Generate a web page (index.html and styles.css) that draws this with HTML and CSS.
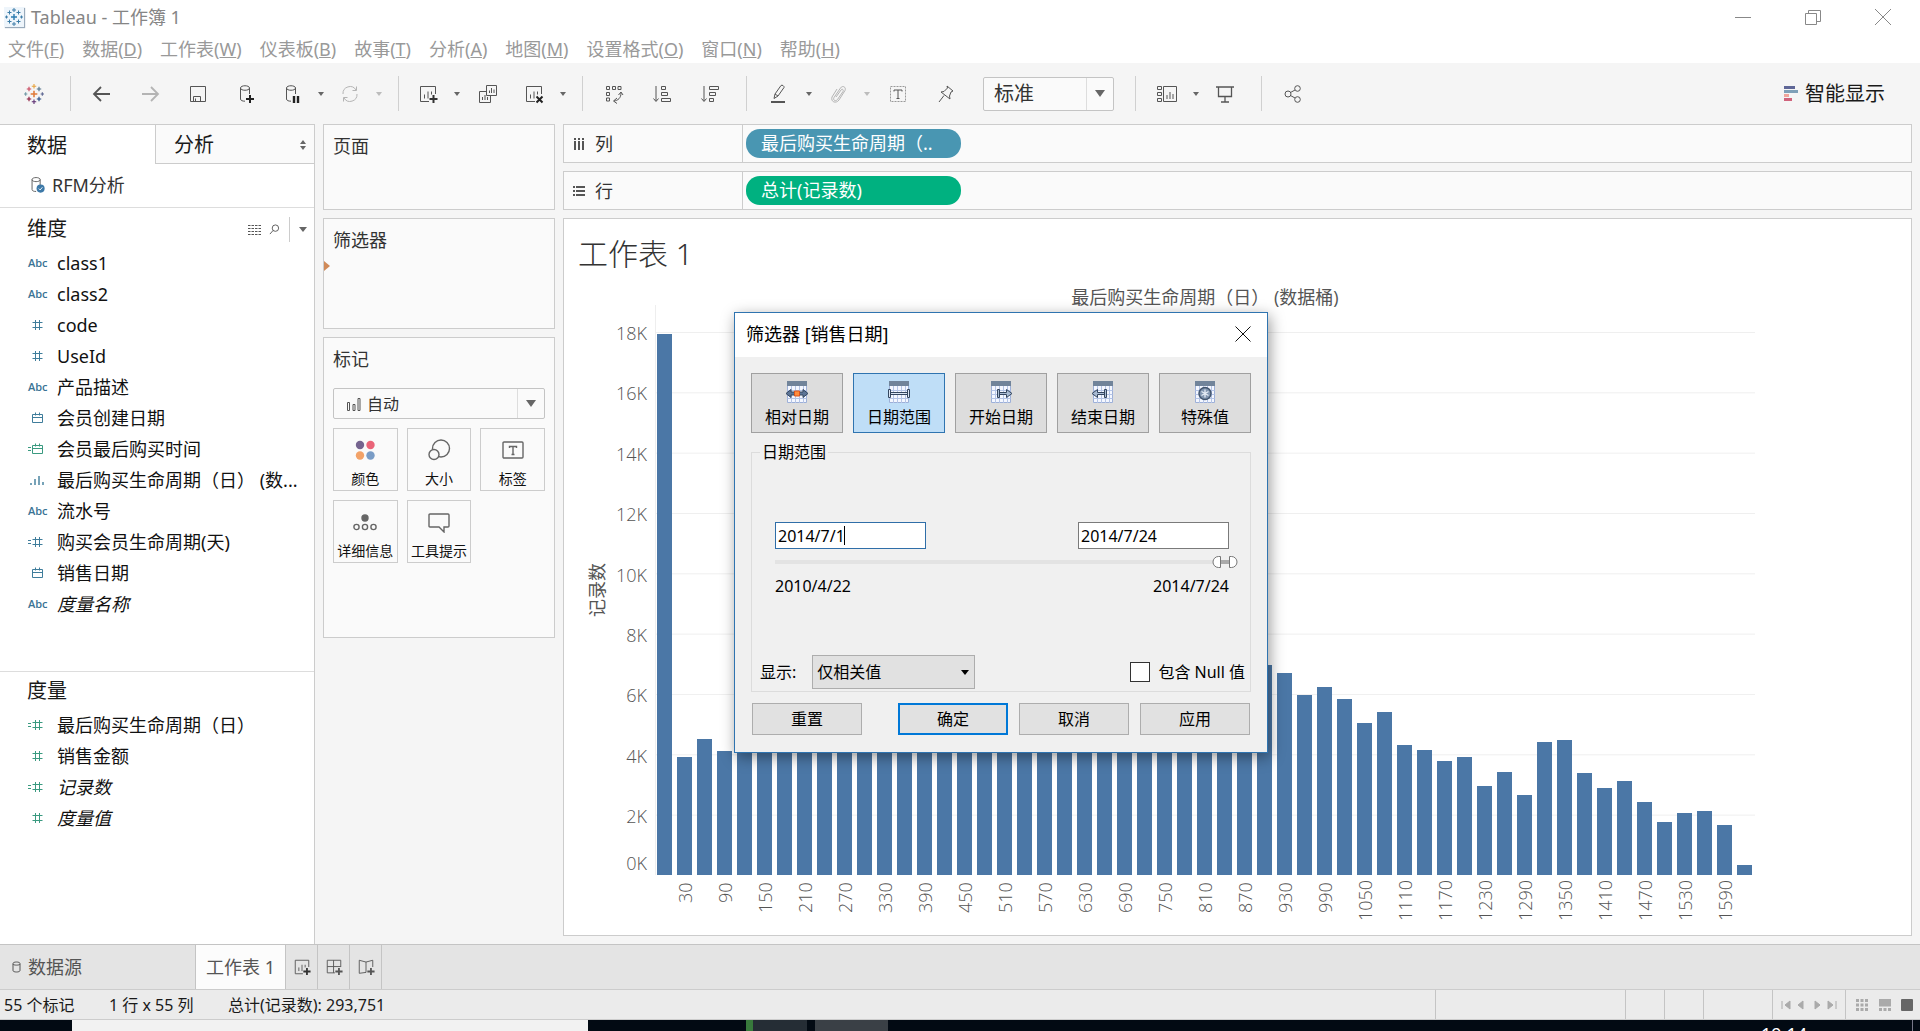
FILE: index.html
```html
<!DOCTYPE html>
<html lang="zh-CN">
<head>
<meta charset="utf-8">
<title>Tableau - 工作簿 1</title>
<link rel="stylesheet" href="styles.css">
</head>
<body>
<svg class="defs" aria-hidden="true">
  <symbol id="tableau" viewBox="0 0 18 18">
    <path d="M9 6v6M6 9h6" stroke="#e07b39" stroke-width="1.400"/>
    <path d="M4.500 2.500v4M2.500 4.500h4" stroke="#c8455c"/><path d="M13.500 2.500v4M11.500 4.500h4" stroke="#4f6f87"/>
    <path d="M4.500 11.500v4M2.500 13.500h4" stroke="#8a1538"/><path d="M13.500 11.500v4M11.500 13.500h4" stroke="#1f447e"/>
    <path d="M9 0v4M7 2h4" stroke="#e8a23c"/><path d="M9 14v4M7 16h4" stroke="#5b2d72"/>
    <path d="M1.500 7.500v3M0 9h3" stroke="#7199a6"/><path d="M16.500 7.500v3M15 9h3" stroke="#5b6591"/>
  </symbol>
  <symbol id="tableau-blue" viewBox="0 0 18 18">
    <path d="M9 6v6M6 9h6" stroke="#2b7bb0" stroke-width="1.400"/>
    <path d="M4.500 2.500v4M2.500 4.500h4M13.500 2.500v4M11.500 4.500h4M4.500 11.500v4M2.500 13.500h4M13.500 11.500v4M11.500 13.500h4M9 0v4M7 2h4M9 14v4M7 16h4M1.500 7.500v3M0 9h3M16.500 7.500v3M15 9h3" stroke="#3c7da8"/>
  </symbol>
  <symbol id="back" viewBox="0 0 20 20"><path d="M2 10h16M9 3l-7 7 7 7" stroke-width="1.800"/></symbol>
  <symbol id="fwd" viewBox="0 0 20 20"><path d="M2 10h16M11 3l7 7-7 7" stroke-width="1.800"/></symbol>
  <symbol id="save" viewBox="0 0 20 20"><path d="M2.500 2.500h15v15h-15zM5.500 17.500v-5h7v5M7.500 14.500v3"/></symbol>
  <symbol id="db" viewBox="0 0 20 20"><path d="M4.500 4c0-3 9-3 9 0s-9 3-9 0v11c0 1.500 2 2.200 4.500 2.200M13.500 4v6"/></symbol>
  <symbol id="dbplus" viewBox="0 0 20 20"><use href="#db"/><path d="M14 11v8M10 15h8" stroke="#222" stroke-width="2"/></symbol>
  <symbol id="dbpause" viewBox="0 0 20 20"><use href="#db"/><path d="M12 12v7M16 12v7" stroke="#222" stroke-width="2.400"/></symbol>
  <symbol id="refresh" viewBox="0 0 20 20"><path d="M3 10a7 7 0 0 1 13-4M17 10a7 7 0 0 1-13 4M16.500 2.500V6.500H12.500M3.500 17.500V13.500H7.500"/></symbol>
  <symbol id="sheet" viewBox="0 0 20 20"><path d="M11 17.500H2.500v-15h15V10M6.500 14.500v-4M10 14.500v-7M13.500 10.500v-3"/></symbol>
  <symbol id="newsheet" viewBox="0 0 20 20"><use href="#sheet"/><path d="M15.500 11v8M11.500 15h8" stroke="#333" stroke-width="2"/></symbol>
  <symbol id="clearsheet" viewBox="0 0 20 20"><use href="#sheet"/><path d="M12.500 12.500l6 6M18.500 12.500l-6 6" stroke="#222" stroke-width="2"/></symbol>
  <symbol id="dup" viewBox="0 0 20 20"><path d="M8.500 1.500h10v10h-10zM8.500 7.500h-7v11h11v-7M11.500 9V6.500M13.500 9V4M16 9V5.500M4.500 16v-3M7 16v-5M9.500 16v-3"/></symbol>
  <symbol id="swap" viewBox="0 0 20 20"><path d="M2.500 2.500h3v3h-3zM8.500 2.500h3v3h-3zM14 2.500h3v3h-3zM2.500 8.500h3v3h-3zM2.500 14h3v3h-3zM17 9c0 5-3 7.500-7 8M13 14l-3.500 3 3.500 2.500M14.500 11l2.500-3 2 3"/></symbol>
  <symbol id="asc" viewBox="0 0 20 20"><path d="M4 2v15M1.500 14.500L4 17.500l2.500-3M9.500 2.500h4v3h-4zM9.500 8.500h6v3h-6zM9.500 14.500h9v3h-9z"/></symbol>
  <symbol id="desc" viewBox="0 0 20 20"><path d="M4 2v15M1.500 14.500L4 17.500l2.500-3M9.500 2.500h9v3h-9zM9.500 8.500h6v3h-6zM9.500 14.500h4v3h-4z"/></symbol>
  <symbol id="pen" viewBox="0 0 20 20"><path d="M6 14.500l1-4.500 6-8.500c1-1 3.500.500 3 2l-6 8.500zM7 10l3 2"/><path d="M3 18h14" stroke-width="2"/></symbol>
  <symbol id="clip" viewBox="0 0 20 20"><path d="M8 13l5-7c1-1.500 3-.5 2 1.500L9.500 15.500c-2 2.500-5 .5-3.500-2L12.500 4c2-3 6-1 4.500 2.500L11 16c-3 4-8.500 2-7-3l5-8"/></symbol>
  <symbol id="textbox" viewBox="0 0 20 20"><path d="M2.500 2.500h15v15h-15z" stroke="#999" stroke-dasharray="2 1"/><path d="M6 7.500V6h8v1.500M10 6v9M8.500 14.500h3"/></symbol>
  <symbol id="pin" viewBox="0 0 20 20"><path d="M11 2l6 5-2 1-1.500 4 .5 3-9-7 3-.5L11.500 4zM8 11.500L3 18"/></symbol>
  <symbol id="cards" viewBox="0 0 20 20"><path d="M.5 2.500h4v3h-4zM.5 8.500h4v3h-4zM.5 14.500h4v3h-4zM6.500 2.500h13v15h-13zM10 15v-4M13 15V8M16 15v-5"/></symbol>
  <symbol id="present" viewBox="0 0 20 20"><path d="M1 3h18M3.500 3v9.500h13V3M10 12.500V18M6 18h8" stroke-width="1.300"/></symbol>
  <symbol id="share" viewBox="0 0 20 20"><circle cx="5" cy="10" r="3"/><circle cx="14.500" cy="4.500" r="2.800"/><circle cx="14.500" cy="15.500" r="2.800"/><path d="M7.500 8.500L12 6M7.500 11.500L12 14"/></symbol>
  <symbol id="hash" viewBox="0 0 20 12"><path d="M4.500 3.500h10M4.500 8.500h10M7.500 1v10M11.500 1v10"/></symbol>
  <symbol id="eqhash" viewBox="0 0 20 12"><path d="M0 4.500h3M0 7.500h3"/><use href="#hash"/></symbol>
  <symbol id="cal" viewBox="0 0 20 12"><path d="M4.500 2.500h10v8h-10zM4.500 5.500h10M7.500 .5v3M11.500 .5v3"/></symbol>
  <symbol id="eqcal" viewBox="0 0 20 12"><path d="M0 4.500h3M0 7.500h3"/><use href="#cal"/></symbol>
  <symbol id="bins" viewBox="0 0 20 12"><path d="M3 9v2M7 5v6M11 2v9M15 8v3" stroke-width="1.400"/></symbol>
  <symbol id="calendar" viewBox="0 0 24 24">
    <path d="M2.500 2.500h19v20h-19z" fill="#f4f7ff" stroke="#9db0d8"/><path d="M2 1h20v5H2z" fill="#71849a" stroke="none"/>
    <path d="M2.500 10.500h19M2.500 14.500h19M2.500 18.500h19M6.500 6v17M10.500 6v17M14.500 6v17M18.500 6v17" stroke="#b4c4e6"/>
  </symbol>
</svg>

<header class="titlebar">
  <svg class="appicon"><use href="#tableau-blue"/></svg>
  <span class="apptitle">Tableau - 工作簿 1</span>
  <div class="winbtns">
    <button aria-label="最小化"><svg class="ic"><path d="M2 10.500h16"/></svg></button>
    <button aria-label="还原"><svg class="ic"><path d="M2.500 6.500h11v11h-11zM5.500 6.500v-3h12v11h-4"/></svg></button>
    <button aria-label="关闭"><svg class="ic"><path d="M2 2l16 16M18 2L2 18"/></svg></button>
  </div>
</header>

<nav class="menubar">
  <a href="#">文件(<u>F</u>)</a><a href="#">数据(<u>D</u>)</a><a href="#">工作表(<u>W</u>)</a><a href="#">仪表板(<u>B</u>)</a><a href="#">故事(<u>T</u>)</a><a href="#">分析(<u>A</u>)</a><a href="#">地图(<u>M</u>)</a><a href="#">设置格式(<u>O</u>)</a><a href="#">窗口(<u>N</u>)</a><a href="#">帮助(<u>H</u>)</a>
</nav>

<div class="toolbar">
  <button class="tb" aria-label="起始页"><svg class="ic"><use href="#tableau"/></svg></button>
  <i class="sep"></i>
  <button class="tb" aria-label="撤消"><svg class="ic"><use href="#back"/></svg></button>
  <button class="tb dim" aria-label="重做"><svg class="ic"><use href="#fwd"/></svg></button>
  <button class="tb" aria-label="保存"><svg class="ic"><use href="#save"/></svg></button>
  <button class="tb" aria-label="新建数据源"><svg class="ic"><use href="#dbplus"/></svg></button>
  <button class="tb split" aria-label="暂停更新"><svg class="ic"><use href="#dbpause"/></svg></button><button class="more" aria-label="更多"></button>
  <button class="tb split dim" aria-label="刷新"><svg class="ic"><use href="#refresh"/></svg></button><button class="more dim" aria-label="更多"></button>
  <i class="sep"></i>
  <button class="tb split" aria-label="新建工作表"><svg class="ic"><use href="#newsheet"/></svg></button><button class="more" aria-label="更多"></button>
  <button class="tb" aria-label="复制工作表"><svg class="ic"><use href="#dup"/></svg></button>
  <button class="tb split" aria-label="清除工作表"><svg class="ic"><use href="#clearsheet"/></svg></button><button class="more" aria-label="更多"></button>
  <i class="sep"></i>
  <button class="tb" aria-label="交换行和列"><svg class="ic"><use href="#swap"/></svg></button>
  <button class="tb" aria-label="升序排序"><svg class="ic"><use href="#asc"/></svg></button>
  <button class="tb" aria-label="降序排序"><svg class="ic"><use href="#desc"/></svg></button>
  <i class="sep"></i>
  <button class="tb" aria-label="突出显示"><svg class="ic"><use href="#pen"/></svg></button><button class="more" aria-label="更多"></button>
  <button class="tb split dim" aria-label="分组"><svg class="ic"><use href="#clip"/></svg></button><button class="more dim" aria-label="更多"></button>
  <button class="tb" aria-label="显示标记标签"><svg class="ic"><use href="#textbox"/></svg></button>
  <button class="tb" aria-label="固定轴"><svg class="ic"><use href="#pin"/></svg></button>
  <div class="combo fit"><select aria-label="适合"><option>标准</option></select><i class="drop"></i></div>
  <i class="sep"></i>
  <button class="tb" aria-label="显示/隐藏卡"><svg class="ic"><use href="#cards"/></svg></button><button class="more tight" aria-label="更多"></button>
  <button class="tb" aria-label="演示模式"><svg class="ic"><use href="#present"/></svg></button>
  <i class="sep"></i>
  <button class="tb" aria-label="共享"><svg class="ic"><use href="#share"/></svg></button>
  <button class="showme"><svg class="smicon" viewBox="0 0 14 16"><path d="M0 0h11v3H0z" fill="#5f6797"/><path d="M0 4h14v3H0z" fill="#7fa0b8"/><path d="M0 8h5v3H0z" fill="#f0a69c"/><path d="M0 12h8v3H0z" fill="#d0637c"/></svg>智能显示</button>
</div>

<main class="work">
  <aside class="datapane">
    <div class="panetabs">
      <button class="on">数据</button>
      <button class="off">分析<svg class="spin" viewBox="0 0 6 10"><path d="M3 0l3 4H0zM3 10L0 6h6z"/></svg></button>
    </div>
    <div class="source"><svg class="srcic" viewBox="0 0 20 20"><use href="#db"/><circle cx="14" cy="14" r="4.500" class="check"/><path d="M12 14l1.500 1.500 2.500-3" stroke="#fff"/></svg>RFM分析</div>
    <section class="dims">
      <div class="sechead"><h2>维度</h2>
        <svg class="grid" viewBox="0 0 13 11"><path d="M0 1.500h13M0 4.500h13M0 7.500h13M0 10.500h13" stroke-dasharray="2.500 1"/></svg>
        <svg class="lens" viewBox="0 0 12 12"><circle cx="7" cy="4.500" r="3.500"/><path d="M4.500 7L1 11"/></svg>
        <i class="vline"></i><i class="tri"></i>
      </div>
      <ul class="fields">
        <li><b>Abc</b>class1</li>
        <li><b>Abc</b>class2</li>
        <li><svg><use href="#hash"/></svg>code</li>
        <li><svg><use href="#hash"/></svg>UseId</li>
        <li><b>Abc</b>产品描述</li>
        <li><svg><use href="#cal"/></svg>会员创建日期</li>
        <li class="green"><svg><use href="#eqcal"/></svg>会员最后购买时间</li>
        <li><svg><use href="#bins"/></svg>最后购买生命周期（日） (数...</li>
        <li><b>Abc</b>流水号</li>
        <li><svg><use href="#eqhash"/></svg>购买会员生命周期(天)</li>
        <li><svg><use href="#cal"/></svg>销售日期</li>
        <li><b>Abc</b><em>度量名称</em></li>
      </ul>
    </section>
    <section class="measures">
      <div class="sechead"><h2>度量</h2></div>
      <ul class="fields">
        <li class="green"><svg><use href="#eqhash"/></svg>最后购买生命周期（日）</li>
        <li class="green"><svg><use href="#hash"/></svg>销售金额</li>
        <li class="green"><svg><use href="#eqhash"/></svg><em>记录数</em></li>
        <li class="green"><svg><use href="#hash"/></svg><em>度量值</em></li>
      </ul>
    </section>
  </aside>

  <div class="cards">
    <section class="card pages"><h3>页面</h3></section>
    <section class="card filters"><h3>筛选器</h3><i class="marker"></i></section>
    <section class="card marks"><h3>标记</h3>
      <div class="combo marktype">
        <svg class="barsic" viewBox="0 0 14 14"><path d="M.5 5.500h2v8h-2zM6 7.500h2v6h-2zM11 1.500h2v12h-2z"/></svg>
        <select aria-label="标记类型"><option>自动</option></select><i class="drop"></i>
      </div>
      <div class="markgrid">
        <button><svg viewBox="0 0 24 22"><g stroke="none"><circle cx="7" cy="6" r="4.200" fill="#75648f"/><circle cx="17.500" cy="6" r="4.200" fill="#ea6478"/><circle cx="7" cy="16.500" r="4.200" fill="#f2a268"/><circle cx="17.500" cy="16.500" r="4.200" fill="#799cc6"/></g></svg>颜色</button>
        <button><svg viewBox="0 0 24 22"><circle cx="14" cy="9.500" r="8.500"/><circle cx="7" cy="15.500" r="5" fill="#fafafa"/></svg>大小</button>
        <button><svg viewBox="0 0 24 22"><rect x="2" y="3" width="20" height="16" rx="1"/><path d="M8.500 9V7.500h7V9M12 7.500v8M10.500 15.500h3"/></svg>标签</button>
        <button><svg viewBox="0 0 24 22"><circle cx="12" cy="7" r="3" fill="#666"/><circle cx="3.500" cy="16" r="2.600"/><circle cx="12" cy="16" r="2.600"/><circle cx="20.500" cy="16" r="2.600"/></svg>详细信息</button>
        <button><svg viewBox="0 0 24 22"><path d="M3 3h18q1 0 1 1v11q0 1-1 1h-4v5l-5-5H3q-1 0-1-1V4q0-1 1-1z"/></svg>工具提示</button>
      </div>
    </section>
  </div>

  <div class="view">
    <div class="shelf"><div class="shelfname"><svg viewBox="0 0 12 12"><path d="M2 0v2M6 0v2M10 0v2M2 3v9M6 3v9M10 3v9" stroke-width="2"/></svg>列</div><span class="pill blue">最后购买生命周期（..</span></div>
    <div class="shelf"><div class="shelfname"><svg viewBox="0 0 12 12"><path d="M0 2h2M0 6h2M0 10h2M3 2h9M3 6h9M3 10h9" stroke-width="2"/></svg>行</div><span class="pill emerald">总计(记录数)</span></div>
    <section class="sheet">
      <h1>工作表 1</h1>
      <div class="chart">
        <div class="coltitle">最后购买生命周期（日） (数据桶)</div>
        <div class="ytitle"><span>记录数</span></div>
        <div class="yaxis" id="yaxis"></div>
        <div class="plot" id="plot"></div>
        <div class="xaxis" id="xaxis"></div>
      </div>
    </section>
  </div>
</main>

<footer class="sheettabs">
  <button class="srctab"><svg viewBox="0 0 10 12"><path d="M1 2.500c0-2 7-2 7 0v7c0 2-7 2-7 0zM1 3c0 1.500 7 1.500 7 0"/></svg>数据源</button>
  <button class="current">工作表 1</button>
  <button class="add" aria-label="新建工作表"><svg viewBox="0 0 20 20"><use href="#newsheet"/></svg></button>
  <button class="add" aria-label="新建仪表板"><svg viewBox="0 0 20 20"><path d="M17.500 10V2.500h-15v14H11M2.500 9.500h15M9.500 2.500v14"/><path d="M15.500 11v8M11.500 15h8" stroke-width="2"/></svg></button>
  <button class="add" aria-label="新建故事"><svg viewBox="0 0 20 20"><path d="M10 16l-7.500 1v-14.500l7.500 2 7.500-2V10M10 4.500V16"/><path d="M15.500 11v8M11.500 15h8" stroke-width="2"/></svg></button>
</footer>
<div class="status">
  <span class="s1">55 个标记</span><span class="s2">1 行 x 55 列</span><span>总计(记录数): 293,751</span>
  <div class="cells"><i class="c1"></i><i class="c2"></i><i class="c2"></i><i class="c3"></i>
    <div class="nav"><svg viewBox="0 0 10 10"><path d="M1 1v8M9 1v8L4 5z"/></svg><svg viewBox="0 0 10 10"><path d="M7 1v8L2 5z"/></svg><svg viewBox="0 0 10 10"><path d="M3 1v8l5-4z"/></svg><svg viewBox="0 0 10 10"><path d="M9 1v8M1 1v8l5-4z"/></svg></div>
    <div class="modes"><svg viewBox="0 0 12 12"><path d="M0 0h3v3H0zM4.500 0h3v3h-3zM9 0h3v3H9zM0 4.500h3v3H0zM4.500 4.500h3v3h-3zM9 4.500h3v3H9zM0 9h3v3H0zM4.500 9h3v3h-3zM9 9h3v3H9z"/></svg><svg viewBox="0 0 12 12"><path d="M0 0h12v7.500H0zM0 9h3v3H0zM4.500 9h3v3h-3zM9 9h3v3H9z"/></svg><svg class="full" viewBox="0 0 12 12"><rect width="12" height="12" rx="1"/></svg></div>
  </div>
</div>
<div class="taskbar"><i class="search"></i><i class="t1"></i><i class="t2"></i><i class="t3"></i><span class="clock">19:14</span><i class="peek"></i></div>

<div class="dialog" role="dialog" aria-label="筛选器 [销售日期]">
  <div class="dlghead">筛选器 [销售日期]<button aria-label="关闭"><svg viewBox="0 0 16 16"><path d="M.5 .5l15 15M15.500 .5l-15 15"/></svg></button></div>
  <div class="dlgbody">
    <div class="kinds">
      <button><svg viewBox="0 0 24 24"><use href="#calendar"/><path d="M1 13.500l5-4v2.500h12V9.500l5 4-5 4V15H6v2.500z" fill="#5d7596" stroke="#34465f"/><path d="M9.500 11h5v5h-5z" fill="#ff8c3c" stroke="#d9541e"/></svg>相对日期</button>
      <button class="on"><svg viewBox="0 0 24 24"><use href="#calendar"/><path d="M1.500 9.500h2v8h-2zM20.500 9.500h2v8h-2zM3.500 12.500h17v2h-17z" fill="#dbe6f5" stroke="#34465f"/></svg>日期范围</button>
      <button><svg viewBox="0 0 24 24"><use href="#calendar"/><path d="M8.500 9.500h2v8h-2zM10.500 12.500h7v-3l5.500 4-5.500 4v-3h-7z" fill="#a9bbd3" stroke="#34465f"/></svg>开始日期</button>
      <button><svg viewBox="0 0 24 24"><use href="#calendar"/><path d="M13.500 9.500h2v8h-2zM13.500 12.500h-7v-3l-5.500 4 5.500 4v-3h7z" fill="#a9bbd3" stroke="#34465f"/></svg>结束日期</button>
      <button><svg viewBox="0 0 24 24"><use href="#calendar"/><circle cx="12" cy="13.500" r="6" fill="#8195b0" stroke="#42556e" stroke-width="1.500"/><path d="M12 9.500v8M8.500 11.500l7 4M15.500 11.500l-7 4" stroke="#e6edf6" stroke-width="1.300"/></svg>特殊值</button>
    </div>
    <fieldset>
      <legend>日期范围</legend>
      <div class="range">
        <div class="fieldwrap"><input type="text" class="focus" value="2014/7/1" aria-label="开始日期"><i class="cursor"></i></div>
        <input type="text" value="2014/7/24" aria-label="结束日期">
      </div>
      <div class="slider"><svg class="thumbs" viewBox="0 0 26 12"><path d="M9 4h8v4H9z" fill="#aaa" stroke="none"/><path d="M8.500 .5v11H6.500a5.500 5.500 0 0 1 0-11zM17.500 .5v11h2a5.500 5.500 0 0 0 0-11z" fill="#fff" stroke="#777"/></svg></div>
      <div class="range ends"><span>2010/4/22</span><span>2014/7/24</span></div>
      <div class="options">
        <label for="show">显示:</label>
        <div class="show"><select id="show"><option>仅相关值</option></select><i class="drop"></i></div>
        <label class="nulls"><input type="checkbox">包含 Null 值</label>
      </div>
    </fieldset>
    <div class="actions"><button>重置</button><button class="ok">确定</button><button>取消</button><button>应用</button></div>
  </div>
</div>
<script src="chart.js"></script>
</body>
</html>
```
FILE: styles.css
```css
* { box-sizing: border-box; }
body {
  margin: 0; min-height: 100vh; display: flex; flex-direction: column; overflow: hidden;
  background: #f5f5f5; color: #1a1a1a;
  font: 18px/24px "Noto Sans", "Noto Sans CJK SC", sans-serif;
}
button, input, select { font: inherit; color: inherit; margin: 0; padding: 0; border: 0; background: none; border-radius: 0; }
select { appearance: none; flex: 1; min-width: 0; outline: 0; }
h1, h2, h3, ul { margin: 0; padding: 0; font-weight: 400; list-style: none; }
i { display: block; }
svg { fill: none; stroke: #555; flex: none; display: block; }
.defs { position: absolute; width: 0; height: 0; }
.ic { width: 20px; height: 20px; }

.titlebar { height: 34px; display: flex; align-items: center; background: #fff; color: #858585; padding-left: 4px; }
.appicon { width: 20px; height: 20px; padding: 1px; background: #eef5fb; box-shadow: 1px 1px 1px #9ab; margin-right: 7px; }
.winbtns { margin-left: auto; padding-right: 2px; display: flex; }
.winbtns button { width: 70px; height: 34px; display: flex; align-items: center; justify-content: center; }
.winbtns svg { stroke: #888; }

.menubar { height: 29px; display: flex; align-items: center; gap: 18px; padding-left: 8px; background: #fff; }
.menubar a { color: #999; text-decoration: none; }

.toolbar { height: 61px; display: flex; align-items: center; padding-left: 10px; }
.tb { width: 48px; height: 36px; display: flex; align-items: center; justify-content: center; }
.tb.split { width: 44px; }
.dim { opacity: .4; }
.more { width: 14px; height: 36px; display: flex; align-items: center; justify-content: center; }
.more::after { content: ""; border: 3px solid transparent; border-top: 4px solid #666; border-bottom: 0; }
.tight { width: 10px; }
.sep { width: 1px; height: 35px; background: #d0d0d0; margin: 0 7px 0 12px; }
.combo { display: flex; align-items: center; border: 1px solid #c4c4c4; background: #fafafa; border-radius: 2px; color: #333; }
.drop { width: 27px; align-self: stretch; display: flex; align-items: center; justify-content: center; border-left: 1px solid #ddd; }
.drop::after { content: ""; border: 5px solid transparent; border-top: 7px solid #666; border-bottom: 0; }
.fit { width: 131px; height: 34px; margin: 0 9px 0 13px; padding-left: 10px; font-size: 20px; }
.showme { margin-left: auto; margin-right: 35px; display: flex; align-items: center; gap: 7px; font-size: 20px; }
.smicon { width: 14px; height: 16px; stroke: none; }

.work { flex: 1; display: flex; }
.datapane { width: 315px; background: #fff; border: 1px solid #ccc; border-left: 0; border-bottom: 0; display: flex; flex-direction: column; }
.panetabs { display: flex; height: 39px; font-size: 20px; }
.panetabs button { text-align: left; padding-top: 2px; }
.panetabs .on { width: 155px; padding-left: 27px; }
.panetabs .off { flex: 1; padding-left: 18px; padding-right: 8px; display: flex; align-items: center; justify-content: space-between; background: #fafafa; border-left: 1px solid #ccc; border-bottom: 1px solid #ccc; }
.spin { width: 6px; height: 10px; fill: #666; stroke: none; }
.source { height: 44px; display: flex; align-items: center; padding: 0 0 2px 28px; gap: 6px; border-bottom: 1px solid #ddd; color: #333; }
.srcic { width: 18px; height: 18px; }
.check { fill: #3d79a8; stroke: none; }
.dims { flex: 17 0 0; border-bottom: 1px solid #ddd; }
.measures { flex: 10 0 0; }
.sechead { display: flex; align-items: center; height: 39px; padding: 3px 7px 0 27px; }
.measures .sechead { height: 38px; padding-top: 0; }
.sechead h2 { font-size: 20px; margin-right: auto; }
.grid { width: 13px; height: 11px; margin-right: 8px; }
.lens { width: 11px; height: 11px; margin-right: 9px; }
.vline { width: 1px; height: 25px; background: #ccc; margin-right: 9px; }
.tri { border: 4px solid transparent; border-top: 5px solid #666; border-bottom: 0; }
.fields li { display: flex; align-items: center; height: 31px; padding-left: 28px; white-space: nowrap; color: #111; }
.fields b { width: 29px; font: 600 11px/12px "Open Sans", sans-serif; color: #3a7395; }
.fields svg { width: 20px; height: 12px; margin-right: 9px; stroke: #3f7d9b; }
.fields .green svg { stroke: #3a9a80; }

.cards { width: 232px; margin-left: 8px; display: flex; flex-direction: column; gap: 8px; }
.card { border: 1px solid #ccc; background: #fafafa; padding: 9px; color: #333; }
.card h3 { font-size: 18px; line-height: 24px; }
.pages { height: 86px; }
.filters { height: 111px; position: relative; }
.marker { position: absolute; left: 0; top: 42px; border: 5px solid transparent; border-left: 6px solid #d08a58; border-right: 0; }
.marks { height: 301px; }
.marktype { height: 31px; margin: 17px 0 9px; padding-left: 13px; font-size: 16px; }
.barsic { width: 14px; height: 14px; margin-right: 6px; }
.markgrid { display: grid; grid-template-columns: repeat(3, 1fr); gap: 9px; }
.markgrid button { height: 63px; border: 1px solid #ccc; display: flex; flex-direction: column; align-items: center; padding-top: 10px; gap: 7px; font-size: 14px; line-height: 22px; white-space: nowrap; color: #111; }
.markgrid svg { width: 24px; height: 22px; stroke: #666; stroke-width: 1.400; }

.view { flex: 1; min-width: 0; margin: 0 8px 8px; display: flex; flex-direction: column; gap: 8px; }
.shelf { height: 39px; border: 1px solid #ccc; background: #fafafa; display: flex; align-items: center; gap: 3px; }
.shelfname { width: 179px; align-self: stretch; display: flex; align-items: center; gap: 10px; padding-left: 9px; border-right: 1px solid #ccc; color: #333; }
.shelfname svg { width: 12px; height: 12px; }
.pill { width: 215px; height: 29px; border-radius: 14px; padding: 0 15px; line-height: 28px; color: #fff; white-space: nowrap; }
.blue { background: #4996b2; }
.emerald { background: #00b180; }
.sheet { flex: 1; border: 1px solid #ccc; background: #fff; padding: 14px 0 14px 14px; }
.sheet h1 { font-size: 30px; line-height: 42px; font-weight: 300; color: #333; }
.chart {
  display: grid; grid-template-columns: 38px 39px 1100px; grid-template-rows: 30px 570px 46px;
  font-family: "Open Sans", "Noto Sans CJK SC", sans-serif; font-weight: 300; color: #555;
}
.coltitle { grid-column: 3; align-self: end; text-align: center; font-weight: 400; line-height: 16px; }
.ytitle { grid-row: 2; display: flex; align-items: center; justify-content: center; font-weight: 400; }
.ytitle span, .xaxis span { writing-mode: vertical-rl; text-orientation: sideways; transform: rotate(180deg); }
.yaxis { grid-row: 2; display: flex; flex-direction: column; padding: 16px 8px 0 0; text-align: right; }
.yaxis span { flex: 1; line-height: 24px; }
.yaxis span:nth-last-child(2) { flex: 0 0 47px; }
.yaxis span:last-child { flex: 0 0 24px; }
.plot {
  grid-row: 2; display: flex; align-items: flex-end; padding-left: 1px; border-left: 1px solid #eee;
  background: linear-gradient(#efefef 1px, transparent 1px) 0 27px / 100% calc(543px / 9);
}
.plot div { width: 15px; margin-right: 5px; flex: none; background: #4b77a6; }
.xaxis { grid-column: 3; grid-row: 3; display: flex; padding: 7px 0 0 20px; gap: 20px; }
.xaxis span { flex: none; width: 20px; line-height: 20px; text-align: right; }

.sheettabs { height: 45px; display: flex; background: #e4e4e4; border-top: 1px solid #c4c4c4; color: #555; }
.sheettabs button { border-right: 1px solid #c4c4c4; display: flex; align-items: center; }
.srctab { width: 196px; padding-left: 12px; gap: 6px; }
.srctab svg { width: 10px; height: 12px; }
.current { width: 90px; justify-content: center; background: #fcfcfc; }
.add { width: 32px; justify-content: center; }
.add svg { width: 18px; height: 18px; }
.status { height: 31px; display: flex; align-items: center; padding-left: 4px; background: #ebebeb; border-top: 1px solid #ccc; border-bottom: 1px solid #ccc; font-size: 16px; }
.s1 { width: 105px; }
.s2 { width: 119px; }
.cells { margin-left: auto; align-self: stretch; display: flex; }
.cells > * { border-left: 1px solid #c4c4c4; }
.c1 { width: 190px; }
.c2 { width: 39px; }
.c3 { width: 69px; }
.nav, .modes { width: 73px; display: flex; align-items: center; justify-content: space-between; padding: 0 8px; }
.modes { width: 75px; padding: 0 7px 0 10px; }
.nav svg { width: 10px; height: 10px; fill: #aaa; stroke: #aaa; }
.modes svg { width: 12px; height: 12px; fill: #aaa; stroke: none; }
.modes .full { fill: #666; }
.taskbar { height: 11px; overflow: hidden; display: flex; background: #020a13; color: #fff; }
.search { width: 516px; margin-left: 72px; background: #f2f2f2; }
.t1 { width: 7px; margin-left: 158px; background: #387a3c; }
.t2 { width: 54px; background: #252d35; }
.t3 { width: 73px; margin-left: 8px; background: #3a4046; }
.clock { margin-left: auto; line-height: 28px; }
.peek { width: 1px; margin: 0 7px 0 105px; background: #778; }

.dialog {
  position: absolute; left: 734px; top: 312px; width: 534px;
  border: 1px solid #2f74b0; background: #f0f0f0; color: #000; font-size: 16px;
  box-shadow: 2px 4px 14px rgba(0, 0, 0, .4);
}
.dlghead { height: 44px; background: #fff; display: flex; align-items: center; justify-content: space-between; padding: 0 16px 2px 11px; font-size: 18px; }
.dlghead svg { width: 16px; height: 16px; stroke: #111; }
.dlgbody { padding: 16px 16px 17px; }
.kinds { display: flex; gap: 10px; }
.kinds button { flex: 1; height: 60px; background: #ddd; border: 1px solid #a0a0a0; display: flex; flex-direction: column; align-items: center; padding-top: 6px; line-height: 24px; }
.kinds svg { width: 24px; height: 24px; margin-bottom: 1px; }
.kinds .on { background: #bfdef7; border-color: #2f74b0; }
fieldset { margin: 7px 0 0; padding: 58px 5px 2px 8px; border: 1px solid #dcdcdc; min-width: 0; }
legend { padding: 0 2px; line-height: 24px; }
.range { display: flex; justify-content: space-between; padding: 0 16px 0 15px; }
.range input { width: 151px; height: 27px; padding: 0 2px; background: #fff; border: 1px solid #7a7a7a; display: block; }
.range .focus { border-color: #2f6ea8; }
.fieldwrap { position: relative; }
.cursor { position: absolute; left: 69px; top: 4px; width: 1px; height: 19px; background: #000; }
.slider { position: relative; height: 4px; margin: 11px 16px 10px 15px; background: #e3e3e3; }
.thumbs { position: absolute; right: -9px; top: -4px; width: 26px; height: 12px; }
.options { display: flex; align-items: center; margin-top: 57px; }
.show { width: 163px; height: 34px; margin-left: 16px; display: flex; align-items: center; padding-left: 4px; background: #e1e1e1; border: 1px solid #adadad; }
.show .drop { width: 18px; border: 0; }
.show .drop::after { border-width: 5px 4px 0; border-top-color: #000; }
.nulls { margin-left: auto; display: flex; align-items: center; gap: 8px; }
.nulls input { appearance: none; width: 20px; height: 20px; background: #fff; border: 1px solid #333; }
.actions { display: flex; gap: 11px; margin-top: 11px; padding: 0 1px; }
.actions button { width: 110px; height: 32px; background: #e1e1e1; border: 1px solid #adadad; }
.actions button:first-child { margin-right: auto; }
.actions .ok { border: 2px solid #0078d7; }
```
FILE: chart.js
```js
// Bar heights in pixels, one per 30-day bin (2K records = 60px).
const heights = [541, 118, 136, 124, 142, 150, 158, 149, 163, 155, 170, 161, 174, 168, 180, 172,
  186, 190, 181, 194, 188, 200, 192, 205, 198, 210, 203, 214, 206, 212,
  210, 202, 180, 188, 176, 152, 163, 130, 125, 114, 118, 89, 103, 80, 133, 135, 102, 87, 94,
  73, 53, 62, 64, 50, 10];
const plot = document.getElementById('plot');
for (const h of heights) {
  const bar = document.createElement('div');
  bar.style.height = h + 'px';
  plot.append(bar);
}
const label = (parent, text) => {
  const s = document.createElement('span');
  s.textContent = text;
  document.getElementById(parent).append(s);
};
for (let k = 18; k >= 0; k -= 2) label('yaxis', k + 'K');
for (let d = 30; d <= 1590; d += 60) label('xaxis', d);
```
